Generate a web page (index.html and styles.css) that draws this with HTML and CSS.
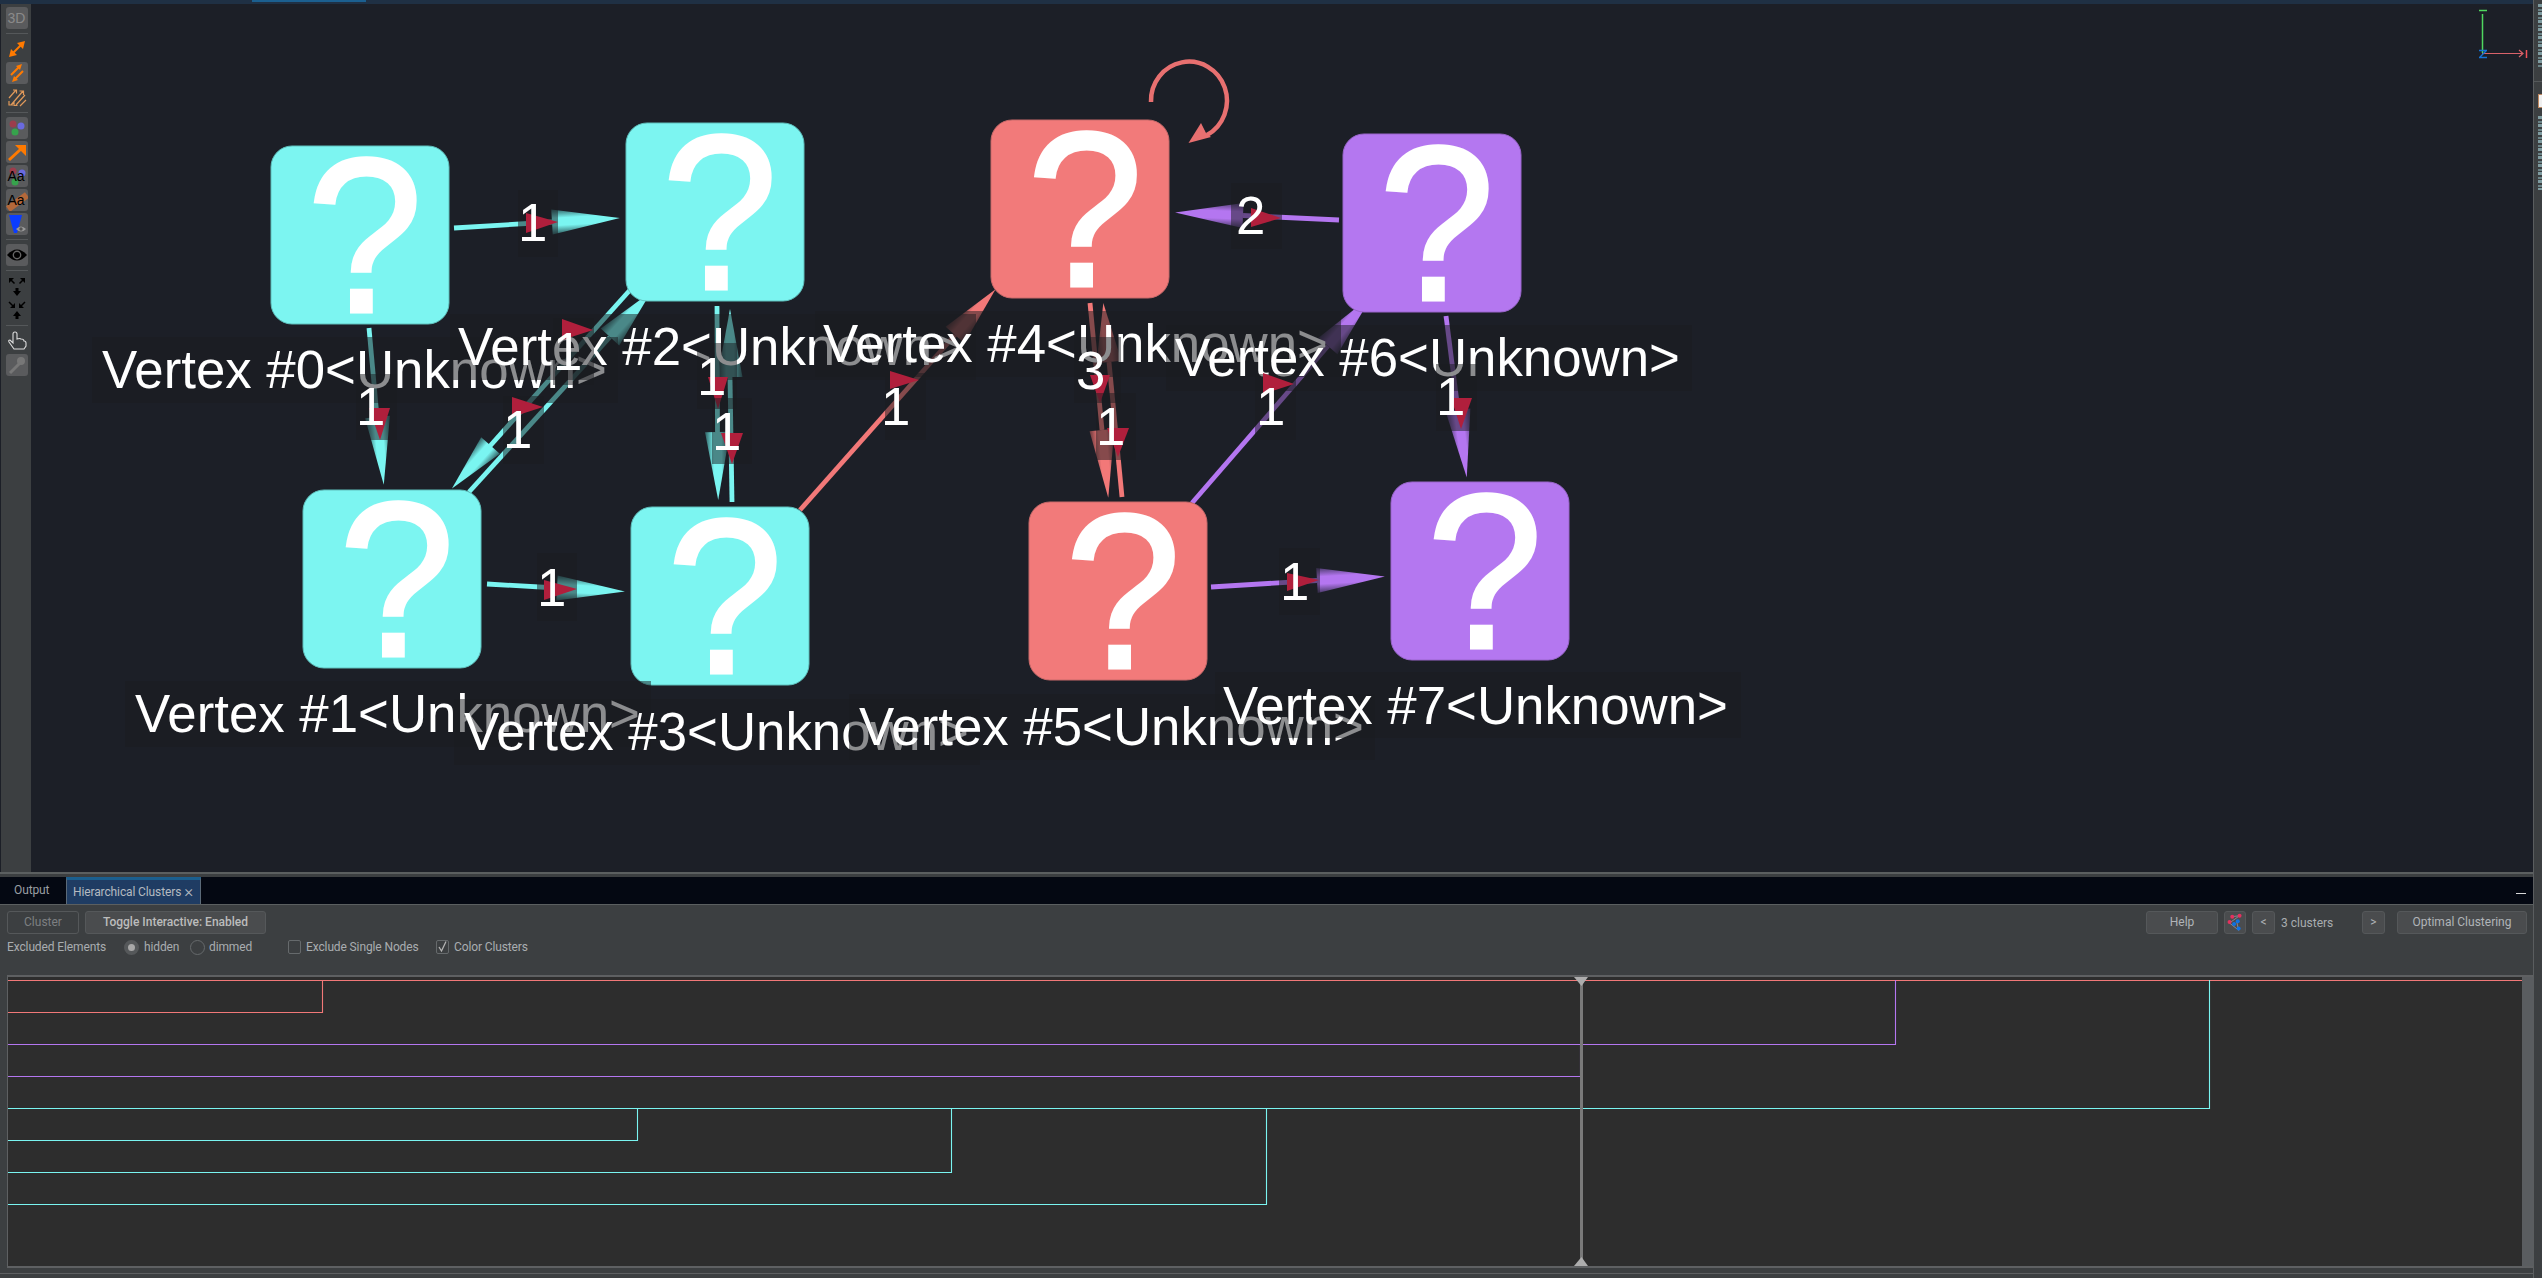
FILE: index.html
```html
<!DOCTYPE html>
<html lang="en">
<head>
<meta charset="UTF-8">
<title>Hierarchical Clusters</title>
<link rel="stylesheet" href="styles.css">
</head>
<body>

<div class="app">
  <div class="work">
    <div class="topstrip"><div class="topstrip-tab"></div></div>

    <div class="main">
      <div class="toolbar">
        <div class="tool on tool-3d">3D</div>
        <div class="sep"></div>
        <svg class="tool-plain" viewBox="0 0 22 22"><path d="M6 16 16 6" class="ico-orange"/><path d="M19 3 11 5 17 11zM3 19 5 11 11 17z" fill="#ff7a00"/></svg>
        <svg class="tool on" viewBox="0 0 22 22"><path d="M5 13 13 5M17 9 9 17" class="ico-orange"/><path d="M16 2 10 4 14 8zM6 20 12 18 8 14z" fill="#ff7a00"/></svg>
        <svg class="tool-plain" viewBox="0 0 22 22"><path d="M3 12 10 4M5 19 17 5M10 19 19 9M14 20 20 14M7 4h3.500v3.500M13.500 5h4v4M3 15v4h4M8 16v3.500h3.500" class="ico-tan"/></svg>
        <div class="sep"></div>
        <svg class="tool on" viewBox="0 0 22 22"><circle cx="7" cy="7" r="3.500" fill="#9c3d4c"/><circle cx="15" cy="9" r="3.500" fill="#6a6adf"/><circle cx="9" cy="15" r="3.500" fill="#36a34c"/></svg>
        <svg class="tool on" viewBox="0 0 22 22"><path d="M3 19 15 8" class="ico-orange-thick"/><path d="M9 4h11v11z" fill="#ff7a00"/></svg>
        <div class="tool on tool-aa">
          <svg viewBox="0 0 22 22"><circle cx="7" cy="6" r="3.500" fill="#9c3d4c"/><circle cx="16" cy="8" r="3.500" fill="#6a6adf"/><circle cx="9" cy="17" r="3.500" fill="#36a34c"/></svg>
          <span>Aa</span>
        </div>
        <div class="tool on tool-aa">
          <svg viewBox="0 0 22 22"><path d="M2 20 21 6" stroke="#b4683a" stroke-width="7"/></svg>
          <span>Aa</span>
        </div>
        <svg class="tool on" viewBox="0 0 22 22"><path d="M3 2h13l-5 18H8z" fill="#0a3cff"/><path d="M10 16q5-5 10 0-5 5-10 0z" fill="#999"/><circle cx="15" cy="16" r="1.700" fill="#555"/></svg>
        <div class="sep"></div>
        <svg class="tool on" viewBox="0 0 22 22"><path d="M1 11q10-11 20 0-10 11-20 0z" fill="#000"/><circle cx="11" cy="11" r="4.400" fill="#666"/><circle cx="11" cy="11" r="3" fill="#000"/></svg>
        <div class="sep"></div>
        <svg class="tool-plain" viewBox="0 0 22 22"><path d="M3 3h5L3 8zM19 3h-5l5 5zM9.500 13h3v3H15l-4 5-4-5h2.500z" fill="#000"/><path d="M5 5 8.500 8.500M17 5l-3.500 3.500" stroke="#000" stroke-width="1.500"/></svg>
        <svg class="tool-plain" viewBox="0 0 22 22"><path d="M9 9H4l5-5zM13 9h5l-5-5zM9.500 20h3v-3H15l-4-5-4 5h2.500z" fill="#000"/><path d="M3 3 7 7M19 3l-4 4" stroke="#000" stroke-width="1.500"/></svg>
        <div class="sep"></div>
        <svg class="tool-plain" viewBox="0 0 22 22"><path d="M8 19 3 12q-1-2 1-2l3 3V4q0-2 2-2t2 2v5q3-1 4 0 3 0 3 2 2 0 2 2v3l-2 3z" fill="none" stroke="#ddd" stroke-width="1.100"/></svg>
        <svg class="tool on" viewBox="0 0 22 22"><circle cx="15" cy="7" r="4" fill="#777"/><path d="M4 19 14 9" stroke="#777" stroke-width="3"/></svg>
      </div>

      <svg class="graph" viewBox="31 4 2502 868">
        <defs>
          <linearGradient id="cone-cyan" x1="0" y1="0" x2="0" y2="1">
            <stop offset="0" stop-color="#2f5f62"/><stop offset=".35" stop-color="#7af5f1"/><stop offset=".65" stop-color="#7af5f1"/><stop offset="1" stop-color="#2f5f62"/>
          </linearGradient>
          <linearGradient id="cone-coral" x1="0" y1="0" x2="0" y2="1">
            <stop offset="0" stop-color="#6a3a3d"/><stop offset=".35" stop-color="#f27878"/><stop offset=".65" stop-color="#f27878"/><stop offset="1" stop-color="#6a3a3d"/>
          </linearGradient>
          <linearGradient id="cone-purple" x1="0" y1="0" x2="0" y2="1">
            <stop offset="0" stop-color="#4a3a6a"/><stop offset=".35" stop-color="#b476f0"/><stop offset=".65" stop-color="#b476f0"/><stop offset="1" stop-color="#4a3a6a"/>
          </linearGradient>
          <polygon id="head-cyan" points="0,-12.500 68,0 0,12.500" fill="url(#cone-cyan)"/>
          <polygon id="head-coral" points="0,-12.500 68,0 0,12.500" fill="url(#cone-coral)"/>
          <polygon id="head-purple" points="0,-12.500 68,0 0,12.500" fill="url(#cone-purple)"/>
        </defs>

        <!-- edges -->
        <line class="edge cyan" x1="454" y1="228" x2="552" y2="222"/>
        <use href="#head-cyan" transform="translate(552 222) rotate(-3.400)"/>
        <line class="edge cyan" x1="369" y1="328" x2="377" y2="417"/>
        <use href="#head-cyan" transform="translate(377.500 417) rotate(84.700)"/>
        <line class="edge cyan" x1="630" y1="290" x2="490" y2="446"/>
        <use href="#head-cyan" transform="translate(490.500 445.500) rotate(131.800) scale(.85 1)"/>
        <line class="edge cyan" x1="469" y1="492" x2="610" y2="337"/>
        <use href="#head-cyan" transform="translate(610 337) rotate(-47.700) scale(.9 1)"/>
        <line class="edge cyan" x1="732" y1="502" x2="730" y2="377"/>
        <use href="#head-cyan" transform="translate(730 377) rotate(-90)"/>
        <line class="edge cyan" x1="717" y1="306" x2="717.500" y2="432"/>
        <use href="#head-cyan" transform="translate(717.500 432) rotate(89.400)"/>
        <line class="edge cyan" x1="487" y1="584" x2="557" y2="588"/>
        <use href="#head-cyan" transform="translate(557 588) rotate(3)"/>

        <line class="edge coral" x1="800" y1="510" x2="955" y2="335"/>
        <use href="#head-coral" transform="translate(955 335) rotate(-48.500) scale(.9 1)"/>
        <line class="edge coral" x1="1090" y1="303" x2="1102" y2="430"/>
        <use href="#head-coral" transform="translate(1102 430) rotate(84.700)"/>
        <line class="edge coral" x1="1122" y1="497" x2="1109" y2="362"/>
        <use href="#head-coral" transform="translate(1109 362) rotate(-95.500) scale(.87 1)"/>
        <path class="edge coral loop" d="M1151 102A38 39 0 1 1 1207 135" fill="none"/>
        <polygon points="1188.500,143 1201,123 1206,133 1211,137" fill="#e87070"/>

        <line class="edge purple" x1="1339" y1="220" x2="1243" y2="215.500"/>
        <use href="#head-purple" transform="translate(1243 215.500) rotate(-177.500)"/>
        <line class="edge purple" x1="1192" y1="503" x2="1328" y2="346"/>
        <use href="#head-purple" transform="translate(1328 346) rotate(-49)"/>
        <line class="edge purple" x1="1446" y1="316" x2="1458" y2="410"/>
        <use href="#head-purple" transform="translate(1458 410) rotate(82.600)"/>
        <line class="edge purple" x1="1211" y1="587" x2="1317" y2="580.500"/>
        <use href="#head-purple" transform="translate(1317 580.500) rotate(-3.300)"/>

        <!-- nodes -->
        <rect class="node cyan-fill" x="271" y="146" width="178" height="178" rx="21"/><text class="qmark" x="360" y="312">?</text>
        <rect class="node cyan-fill" x="303" y="490" width="178" height="178" rx="21"/><text class="qmark" x="392" y="656">?</text>
        <rect class="node cyan-fill" x="626" y="123" width="178" height="178" rx="21"/><text class="qmark" x="715" y="289">?</text>
        <rect class="node cyan-fill" x="631" y="507" width="178" height="178" rx="21"/><text class="qmark" x="720" y="673">?</text>
        <rect class="node coral-fill" x="991" y="120" width="178" height="178" rx="21"/><text class="qmark" x="1080" y="286">?</text>
        <rect class="node coral-fill" x="1029" y="502" width="178" height="178" rx="21"/><text class="qmark" x="1118" y="668">?</text>
        <rect class="node purple-fill" x="1343" y="134" width="178" height="178" rx="21"/><text class="qmark" x="1432" y="300">?</text>
        <rect class="node purple-fill" x="1391" y="482" width="178" height="178" rx="21"/><text class="qmark" x="1480" y="648">?</text>

        <!-- vertex labels, later ones veil earlier ones -->
        <rect class="veil" x="92" y="337" width="526" height="66"/><text class="vlabel" x="102" y="388">Vertex #0&lt;Unknown&gt;</text>
        <rect class="veil" x="125" y="681" width="526" height="66"/><text class="vlabel" x="135" y="732">Vertex #1&lt;Unknown&gt;</text>
        <rect class="veil" x="450" y="314" width="526" height="66"/><text class="vlabel" x="458" y="365">Vertex #2&lt;Unknown&gt;</text>
        <rect class="veil" x="454" y="699" width="526" height="66"/><text class="vlabel" x="464" y="750">Vertex #3&lt;Unknown&gt;</text>
        <rect class="veil" x="815" y="311" width="526" height="66"/><text class="vlabel" x="823" y="362">Vertex #4&lt;Unknown&gt;</text>
        <rect class="veil" x="849" y="694" width="526" height="66"/><text class="vlabel" x="859" y="745">Vertex #5&lt;Unknown&gt;</text>
        <rect class="veil" x="1166" y="325" width="526" height="66"/><text class="vlabel" x="1175" y="376">Vertex #6&lt;Unknown&gt;</text>
        <rect class="veil" x="1215" y="672" width="526" height="66"/><text class="vlabel" x="1223" y="724">Vertex #7&lt;Unknown&gt;</text>

        <!-- edge labels -->
        <rect class="veil" x="518" y="190" width="40" height="67"/><polygon class="mark" points="526,213 558,222 526,233"/><text class="vlabel" x="518" y="241">1</text>
        <rect class="veil" x="356" y="374" width="41" height="66"/><polygon class="mark" points="369,408 390,408 380,440"/><text class="vlabel" x="356" y="425">1</text>
        <rect class="veil" x="503" y="396" width="41" height="68"/><polygon class="mark" points="512,397 543,407 512,417"/><text class="vlabel" x="503" y="448">1</text>
        <rect class="veil" x="553" y="318" width="41" height="67"/><polygon class="mark" points="562,319 593,330 562,340"/><text class="vlabel" x="553" y="370">1</text>
        <rect class="veil" x="697" y="343" width="40" height="66"/><polygon class="mark" points="708,377 728,377 718,409"/><text class="vlabel" x="697" y="395">1</text>
        <rect class="veil" x="712" y="398" width="40" height="66"/><polygon class="mark" points="721,433 743,433 732,464"/><text class="vlabel" x="712" y="450">1</text>
        <rect class="veil" x="537" y="553" width="40" height="68"/><polygon class="mark" points="544,580 577,589 544,600"/><text class="vlabel" x="537" y="606">1</text>
        <rect class="veil" x="885" y="373" width="41" height="67"/><polygon class="mark" points="890,371 919,380 890,389"/><text class="vlabel" x="881" y="425">1</text>
        <rect class="veil" x="1074" y="337" width="47" height="66"/><polygon class="mark" points="1090,375 1110,375 1100,403"/><text class="vlabel" x="1076" y="389">3</text>
        <rect class="veil" x="1096" y="393" width="40" height="67"/><polygon class="mark" points="1107,428 1129,428 1118,457"/><text class="vlabel" x="1096" y="445">1</text>
        <rect class="veil" x="1231" y="183" width="51" height="66"/><polygon class="mark" points="1251,208 1281,218 1251,227"/><text class="vlabel" x="1236" y="234">2</text>
        <rect class="veil" x="1255" y="374" width="41" height="66"/><polygon class="mark" points="1263,373 1294,384 1263,394"/><text class="vlabel" x="1256" y="425">1</text>
        <rect class="veil" x="1436" y="364" width="41" height="67"/><polygon class="mark" points="1451,398 1472,398 1461,429"/><text class="vlabel" x="1436" y="415">1</text>
        <rect class="veil" x="1279" y="548" width="41" height="67"/><polygon class="mark" points="1287,573 1319,580 1287,591"/><text class="vlabel" x="1280" y="600">1</text>

        <!-- axis gizmo -->
        <path d="M2479 10.500h8" stroke="#4fd65f" stroke-width="1.500"/>
        <path d="M2482.500 14v39" stroke="#4fd65f" stroke-width="1.500"/>
        <path d="M2482 53.500h40M2519 50l4 3.500-4 3.500" stroke="#d9626a" stroke-width="1.200" fill="none"/>
        <path d="M2526.500 50v8" stroke="#f0525a" stroke-width="1.500"/>
        <path d="M2479 50.500h8M2479 57.500h8M2486 51l-6 6" stroke="#1475d8" stroke-width="1.400" fill="none"/>
      </svg>
    </div>

    <div class="splitter"></div>

    <div class="tabbar">
      <div class="tab tab-output">Output</div>
      <div class="tab tab-active">Hierarchical Clusters<span class="tab-close">×</span></div>
      <div class="minimize"></div>
    </div>

    <div class="panel">
      <div class="row">
        <div class="btn btn-off btn-cluster">Cluster</div>
        <div class="btn btn-toggle">Toggle Interactive: Enabled</div>
        <div class="row-right">
          <div class="btn btn-help">Help</div>
          <div class="btn btn-icon">
            <svg viewBox="0 0 22 22" width="20" height="20"><path d="M8 4 16 3 5 11 15 19 13 10" fill="none" stroke="#8d8d9a" stroke-width="1"/><circle cx="8" cy="4" r="2.200" fill="#e5305e"/><circle cx="16" cy="3" r="2.200" fill="#e5305e"/><circle cx="5" cy="10" r="2.200" fill="#e5305e"/><circle cx="14" cy="9" r="2.200" fill="#0f72e5"/><circle cx="10" cy="12" r="2.200" fill="#0f72e5"/><circle cx="15" cy="17" r="2.200" fill="#0f72e5"/></svg>
          </div>
          <div class="btn btn-nav">&lt;</div>
          <div class="cluster-count">3 clusters</div>
          <div class="btn btn-nav">&gt;</div>
          <div class="btn btn-optimal">Optimal Clustering</div>
        </div>
      </div>
      <div class="row row-options">
        <span class="opt-label">Excluded Elements</span>
        <span class="radio radio-on"></span><span class="opt-hidden">hidden</span>
        <span class="radio"></span><span class="opt-dimmed">dimmed</span>
        <span class="check"></span><span class="opt-single">Exclude Single Nodes</span>
        <span class="check check-on">
          <svg viewBox="0 0 13 13" width="13" height="13"><path d="M3 7l2.500 4L10 1.500" fill="none" stroke="#b5b5b5" stroke-width="1.300"/></svg>
        </span><span>Color Clusters</span>
      </div>

      <div class="chart">
        <svg class="chart-lines" viewBox="8 977 2514 289">
          <path class="tree red" d="M8 980.500H2522M322.500 980V1012.500H8"/>
          <path class="tree violet" d="M1895.500 980V1044.500H8M1580.500 1044V1076.500H8"/>
          <path class="tree teal" d="M2209.500 980V1108.500H8M637.500 1108V1140.500H8M951.500 1108V1172.500H8M1266.500 1108V1204.500H8"/>
          <path class="slider" d="M1581.500 977V1266"/>
          <polygon class="slider-cap" points="1574,977 1588,977 1581.500,986"/>
          <polygon class="slider-cap" points="1574,1266 1588,1266 1581.500,1257"/>
        </svg>
        <div class="chart-scroll"></div>
      </div>
      <div class="panel-foot"></div>
    </div>
  </div>

  <div class="side">
    <div class="side-text"></div>
    <div class="side-rule"></div>
    <div class="side-box"></div>
    <div class="side-text side-text-low"></div>
  </div>
</div>

</body>
</html>
```

FILE: styles.css
```css
* {
  box-sizing: border-box;
}

html, body {
  margin: 0;
  height: 1278px;
  overflow: hidden;
}

body {
  background-color: #3c3f41;
  font-family: Roboto, "Liberation Sans", sans-serif;
  font-size: 12px;
  color: #a9adb0;
}

.app {
  display: flex;
  height: 1278px;
}

.work {
  display: flex;
  flex-direction: column;
  width: 2534px;
  border-right: 1px solid #5a5d5f;
}

.topstrip {
  height: 4px;
  background-color: #1f3044;
}

.topstrip-tab {
  width: 114px;
  height: 2px;
  margin-left: 252px;
  background-color: #1b5f8f;
}

.main {
  display: flex;
  height: 868px;
  flex: none;
}

/* left toolbar */
.toolbar {
  display: flex;
  flex-direction: column;
  align-items: center;
  gap: 2px;
  width: 31px;
  padding-top: 3px;
  padding-left: 1px;
  border-left: 1px solid #1c1f27;
  background-color: #3c3f41;
}

.tool {
  position: relative;
  flex: none;
  width: 22px;
  height: 22px;
  border-radius: 3px;
  overflow: hidden;
}

.tool.on {
  background-color: #5a5b5d;
}

.tool-plain {
  flex: none;
  width: 22px;
  height: 22px;
}

.tool-3d {
  line-height: 22px;
  text-align: center;
  font-family: "Liberation Sans", sans-serif;
  font-size: 14px;
  color: #8a8a8a;
}

.tool-aa svg {
  display: block;
}

.tool-aa span {
  position: absolute;
  left: 2px;
  top: 3px;
  font-family: "Liberation Sans", sans-serif;
  font-size: 14px;
  color: #000;
}

.sep {
  flex: none;
  width: 22px;
  height: 1px;
  margin: 2px 0;
  background-color: #55585a;
}

.ico-orange {
  fill: none;
  stroke: #ff7a00;
  stroke-width: 2;
}

.ico-orange-thick {
  fill: none;
  stroke: #ff7a00;
  stroke-width: 3;
}

.ico-tan {
  fill: none;
  stroke: #e0995a;
  stroke-width: 1.2;
}

/* graph canvas */
.graph {
  display: block;
  width: 2502px;
  height: 868px;
  background-color: #1c1f27;
}

.edge {
  stroke-width: 4.8;
}

.edge.cyan {
  stroke: #7af5f1;
}

.edge.coral {
  stroke: #f27878;
}

.edge.purple {
  stroke: #b476f0;
}

.edge.loop {
  stroke: #e87070;
  stroke-width: 4.5;
}

.node {
  stroke-width: 1;
}

.cyan-fill {
  fill: #7cf5f1;
  stroke: #5fc0bd;
}

.coral-fill {
  fill: #f27a7a;
  stroke: #c96a6a;
}

.purple-fill {
  fill: #b477f0;
  stroke: #9a66cc;
}

.qmark {
  font-family: "Liberation Sans", sans-serif;
  font-size: 220px;
  fill: #fff;
  stroke: #fff;
  stroke-width: 3;
  text-anchor: middle;
  transform-box: fill-box;
  transform-origin: center;
  transform: translateX(5px) scaleX(0.95);
}

.veil {
  fill: rgba(26, 28, 32, 0.5);
}

.vlabel {
  font-family: "Liberation Sans", sans-serif;
  font-size: 52.8px;
  fill: #fff;
}

.mark {
  fill: #b01f3c;
}

/* tabs */
.splitter {
  flex: none;
  height: 5px;
  border-top: 2px solid #5b5f60;
  background-color: #3c3f41;
}

.tabbar {
  display: flex;
  align-items: stretch;
  flex: none;
  height: 28px;
  border-bottom: 1px solid #5b5f60;
  background-color: #040812;
  letter-spacing: -0.12px;
}

.tab {
  line-height: 27px;
  color: #9a9ea2;
}

.tab-output {
  width: 66px;
  padding-left: 14px;
}

.tab-active {
  width: 135px;
  padding-left: 6px;
  line-height: 24px;
  border-top: 3px solid #1b5f8f;
  border-right: 1px solid #5b6a78;
  border-left: 1px solid #5b6a78;
  background-color: #1f3c63;
  color: #b4bac0;
  white-space: nowrap;
}

.tab-close {
  margin-left: 3px;
  font-size: 17px;
  font-weight: 300;
  line-height: 10px;
  vertical-align: -1px;
}

.minimize {
  width: 10px;
  height: 1px;
  margin: 16px 7px 0 auto;
  background-color: #d8d8d8;
}

/* bottom panel */
.panel {
  flex: 1;
  display: flex;
  flex-direction: column;
  padding: 6px 0 0 7px;
}

.row {
  display: flex;
  align-items: center;
  flex: none;
  height: 23px;
  padding-right: 6px;
}

.btn {
  height: 23px;
  line-height: 21px;
  text-align: center;
  border: 1px solid #55585a;
  border-radius: 3px;
  background-color: #4a4c4e;
  color: #b0b4b8;
}

.btn-cluster {
  width: 72px;
  margin-right: 6px;
  background-color: #3c3f41;
  color: #7c7f82;
}

.btn-toggle {
  width: 181px;
  font-weight: 500;
  color: #bcbcbc;
}

.row-right {
  display: flex;
  align-items: center;
  margin-left: auto;
}

.btn-help {
  width: 72px;
  margin-right: 6px;
}

.btn-icon {
  width: 22px;
  margin-right: 6px;
}

.btn-icon svg {
  display: block;
  margin: 1px 0 0 0;
}

.btn-nav {
  width: 23px;
}

.cluster-count {
  width: 87px;
  padding-left: 6px;
}

.btn-optimal {
  width: 130px;
  margin-left: 12px;
}

.row-options {
  height: 16px;
  margin-top: 5px;
  letter-spacing: -0.12px;
}

.radio {
  flex: none;
  width: 15px;
  height: 15px;
  border: 1px solid #666a6c;
  border-radius: 50%;
  background-color: #3c3f41;
}

.radio-on {
  border: 4px solid #55585a;
  background-color: #a8a8a8;
}

.check {
  flex: none;
  width: 13px;
  height: 14px;
  margin-right: 5px;
  border: 1px solid #666a6c;
  border-radius: 2px;
}

.check svg {
  display: block;
  margin: -1px 0 0 -1px;
}

.opt-label {
  width: 117px;
}

.opt-hidden {
  width: 46px;
  margin-left: 5px;
}

.opt-dimmed {
  width: 79px;
  margin-left: 4px;
}

.opt-single {
  width: 130px;
}

.chart {
  display: flex;
  flex: none;
  width: 2526px;
  height: 293px;
  margin-top: 20px;
  border-top: 2px solid #5e6062;
  border-bottom: 2px solid #5e6062;
  border-left: 1px solid #5e6062;
  background-color: #2d2d2d;
}

.chart-lines {
  display: block;
  width: 2514px;
  height: 289px;
}

.chart-scroll {
  flex: 1;
  background-color: #5a5d60;
}

.panel-foot {
  height: 1px;
  margin: 5px 0 0 -7px;
  background-color: #5e6062;
}

.tree {
  fill: none;
  stroke-width: 1.1;
}

.tree.red {
  stroke: #f27878;
}

.tree.violet {
  stroke: #b476f0;
}

.tree.teal {
  stroke: #7af5f1;
}

.slider {
  stroke: #7a7a7a;
  stroke-width: 3;
}

.slider-cap {
  fill: #adadad;
}

/* right edge, clipped dock tabs */
.side {
  flex: 1;
  display: flex;
  flex-direction: column;
  align-items: flex-end;
  background-color: #3c3f41;
}

.side-text {
  width: 4px;
  height: 64px;
  margin-top: 4px;
  background: repeating-linear-gradient(180deg, #7e9ba0 0 3px, #3c3f41 3px 5px, #6a8488 5px 7px, #3c3f41 7px 8px);
}

.side-text-low {
  height: 74px;
  margin-top: 8px;
}

.side-rule {
  width: 8px;
  height: 1px;
  margin-top: 13px;
  background-color: #55585a;
}

.side-box {
  width: 4px;
  height: 14px;
  margin-top: 12px;
  border: 1px solid #c08860;
  border-right: none;
  background-color: #f0f0f0;
}
```
